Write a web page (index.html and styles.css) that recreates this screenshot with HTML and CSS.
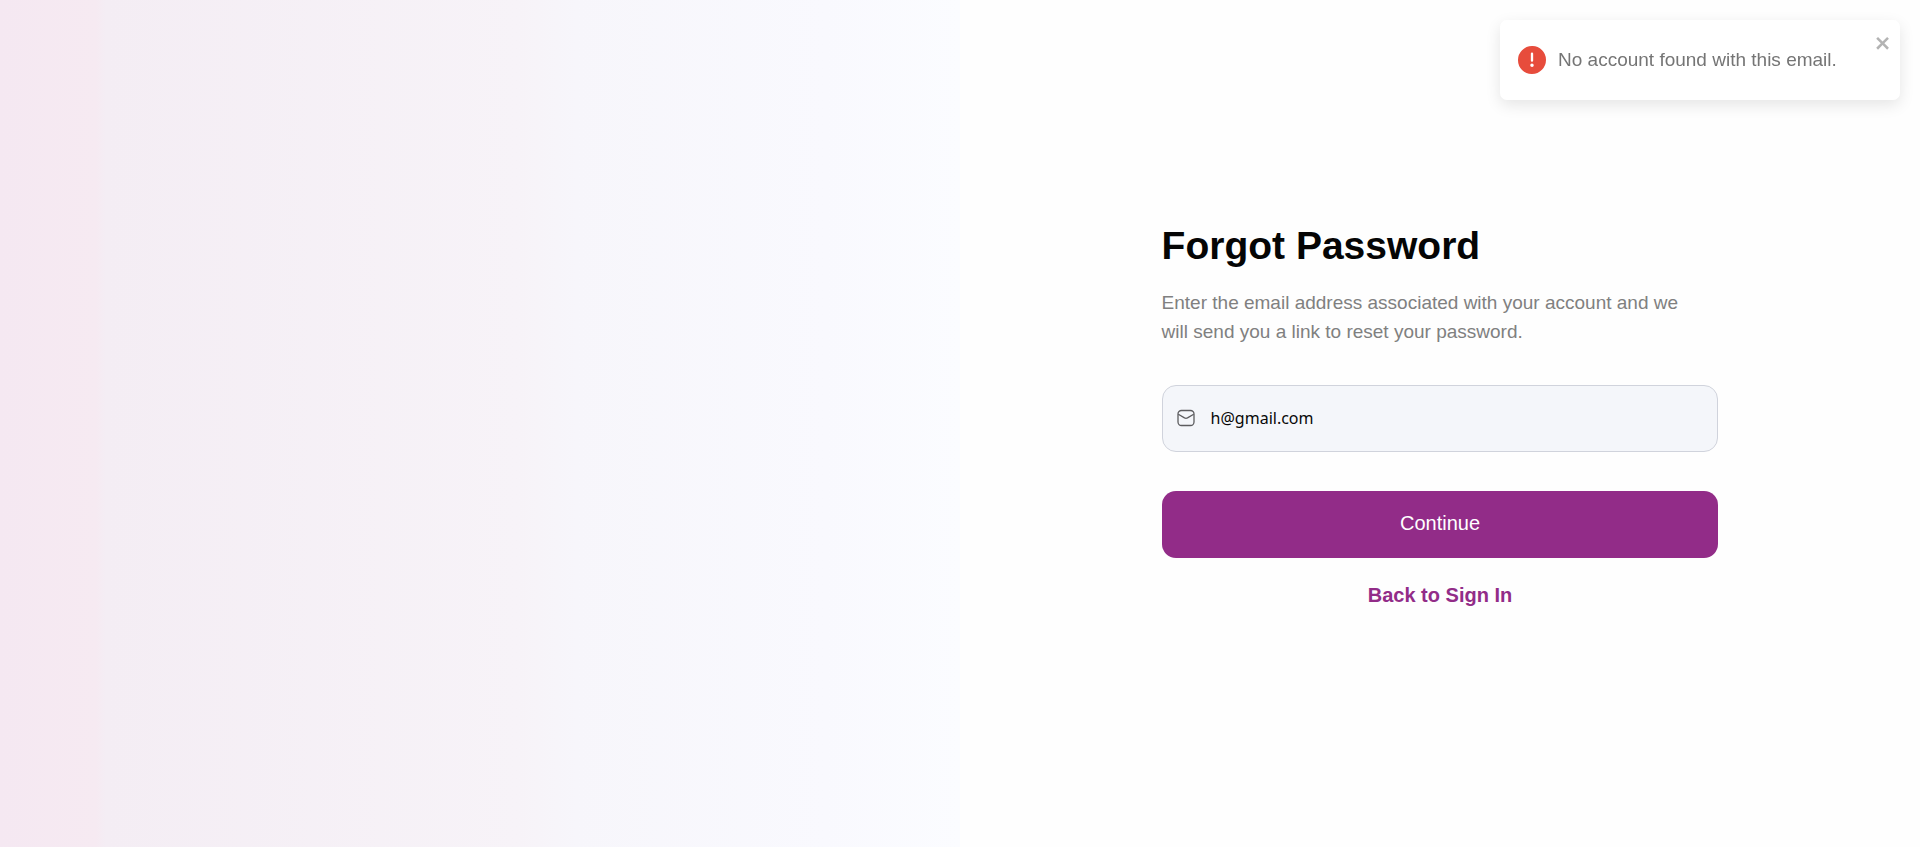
FILE: index.html
```html
<!DOCTYPE html>
<html lang="en">
<head>
<meta charset="utf-8">
<meta name="viewport" content="width=device-width, initial-scale=1">
<title>Forgot Password</title>
<link rel="stylesheet" href="styles.css">
</head>
<body>
<div class="page">
  <aside class="cover"></aside>
  <main class="content">
    <form class="reset-form">
      <h1 class="title">Forgot Password</h1>
      <p class="lead">Enter the email address associated with your account and we will send you a link to reset your password.</p>
      <div class="field">
        <svg class="field-icon" viewBox="0 0 18 18" aria-hidden="true">
          <rect x="1" y="1.500" width="16" height="15" rx="3.500"/>
          <path d="M1.300 5.200 7.500 8.900Q9 9.700 10.500 8.900L16.700 5.200"/>
        </svg>
        <input class="field-input" type="email" aria-label="Email address" value="h@gmail.com">
      </div>
      <button class="submit" type="button">Continue</button>
      <a class="back-link" href="#">Back to Sign In</a>
    </form>
  </main>
</div>
<div class="toast" role="alert">
  <svg class="toast-icon" viewBox="0 0 24 24" aria-hidden="true">
    <path d="M11.983 0a12.206 12.206 0 00-8.510 3.653A11.800 11.800 0 000 12.207 11.779 11.779 0 0011.800 24h.214A12.111 12.111 0 0024 11.791 11.766 11.766 0 0011.983 0zM10.500 16.542a1.476 1.476 0 011.449-1.530h.027a1.527 1.527 0 011.523 1.470 1.475 1.475 0 01-1.449 1.530h-.027a1.529 1.529 0 01-1.523-1.470zM11 12.500v-6a1 1 0 012 0v6a1 1 0 11-2 0z"/>
  </svg>
  <span class="toast-text">No account found with this email.</span>
  <button class="toast-close" type="button" aria-label="Close">
    <svg class="close-icon" viewBox="0 0 14 16" aria-hidden="true">
      <path fill-rule="evenodd" d="M7.710 8.230l3.750 3.750-1.480 1.480-3.750-3.750-3.750 3.750L1 11.980l3.750-3.750L1 4.480 2.480 3l3.750 3.750L9.980 3l1.480 1.480-3.750 3.750z"/>
    </svg>
  </button>
</div>
</body>
</html>
```
FILE: styles.css
```css
* {
  box-sizing: border-box;
}

body {
  margin: 0;
  font-family: "Liberation Sans", Arial, sans-serif;
  background: #fefefe;
}

.page {
  display: grid;
  grid-template-columns: 1fr 1fr;
  min-height: 100vh;
}

.cover {
  background: linear-gradient(90deg, #f5e8f2 0%, #f6eaf2 10%, #f4edf4 11%, #f7f3f8 54%, #f7f6fb 60%, #f9f9fe 86%, #fbfcff 100%);
}

.content {
  display: flex;
  align-items: center;
  justify-content: center;
  padding-bottom: 18px;
}

.reset-form {
  display: flex;
  flex-direction: column;
  width: 58%;
}

.title {
  margin: 0 0 19px;
  font-size: 39px;
  line-height: 46px;
  color: #050505;
}

.lead {
  margin: 0 0 39px;
  padding-right: 20px;
  font-size: 19px;
  line-height: 29px;
  color: #808080;
}

.field {
  display: flex;
  align-items: center;
  gap: 16px;
  height: 67px;
  margin-bottom: 39px;
  padding: 0 14px;
  border: 1px solid #d0d3dc;
  border-radius: 14px;
  background: #f4f6fa;
}

.field-icon {
  flex: none;
  width: 18px;
  height: 18px;
  fill: none;
  stroke: #5c5c5f;
  stroke-width: 1.3;
}

.field-input {
  flex: 1;
  min-width: 0;
  padding: 0;
  border: 0;
  outline: 0;
  background: transparent;
  font-family: "Noto Sans", sans-serif;
  font-size: 16px;
  color: #080808;
}

.submit {
  height: 67px;
  margin-bottom: 25px;
  padding: 0 0 2px;
  border: 0;
  border-radius: 14px;
  background: #922c88;
  font-family: inherit;
  font-size: 20px;
  color: #fff;
}

.back-link {
  align-self: center;
  font-size: 20px;
  font-weight: 700;
  line-height: 24px;
  color: #922c88;
  text-decoration: none;
}

.toast {
  position: fixed;
  top: 20px;
  right: 20px;
  display: flex;
  align-items: center;
  gap: 12px;
  width: 400px;
  min-height: 80px;
  padding: 0 18px;
  border-radius: 7px;
  background: #fff;
  box-shadow: 0 5px 15px rgba(0, 0, 0, 0.1);
}

.toast-icon {
  flex: none;
  width: 28px;
  height: 28px;
  fill: #e74c3c;
}

.toast-text {
  font-size: 19px;
  line-height: 24px;
  color: #757575;
}

.toast-close {
  position: absolute;
  top: 13px;
  right: 8px;
  display: flex;
  padding: 0;
  border: 0;
  background: transparent;
}

.close-icon {
  width: 17px;
  height: 20px;
  fill: #b3b3b3;
}
```
